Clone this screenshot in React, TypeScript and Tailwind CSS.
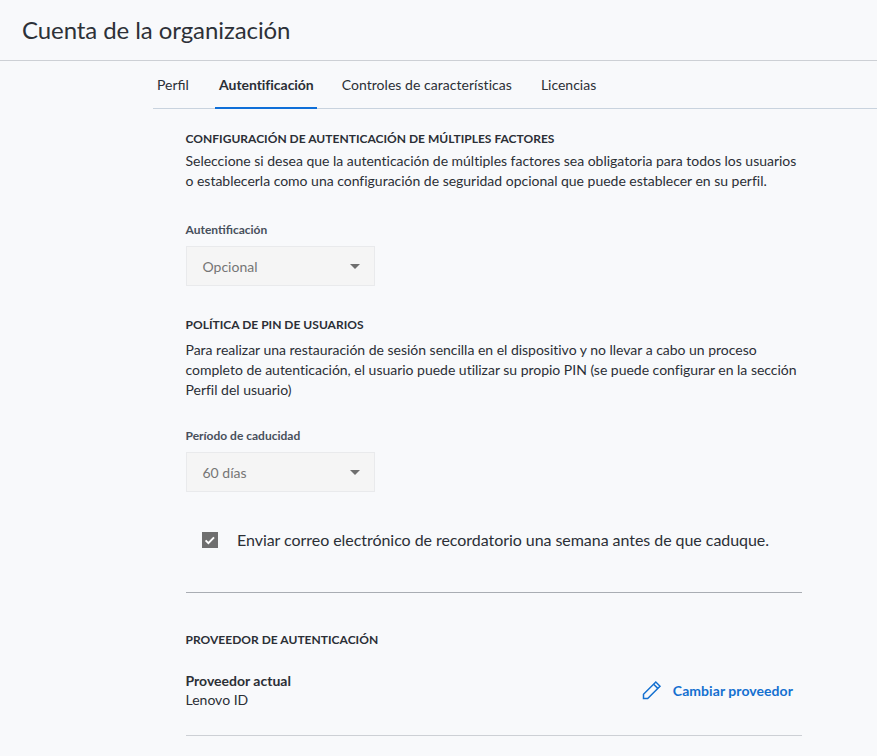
const tabs = [
  { label: 'Perfil', active: false, className: 'w-[33px]' },
  { label: 'Autentificación', active: true, className: '' },
  { label: 'Controles de características', active: false, className: '-ml-[1px] tracking-[0.04px]' },
  { label: 'Licencias', active: false, className: '' },
]

function Caret() {
  return (
    <svg width="10" height="5" viewBox="0 0 10 5" className="text-[#6f6f6f]">
      <path d="M0 0h10L5 5z" fill="currentColor" />
    </svg>
  )
}

function DisabledSelect({ value }: { value: string }) {
  return (
    <div className="flex h-[40px] w-[189px] items-center justify-between border border-[#e9eaec] bg-[#f5f5f5] pl-4 pr-[14px] text-[14px] text-[#757575]">
      <span>{value}</span>
      <Caret />
    </div>
  )
}

function SectionTitle({ children }: { children: string }) {
  return <h2 className="text-[12px] leading-[16px] font-bold tracking-[0.02px] text-[#2b2f36]">{children}</h2>
}

function FieldLabel({ children }: { children: string }) {
  return <div className="text-[12px] leading-[16px] font-bold text-[#48505c]">{children}</div>
}

export default function App() {
  return (
    <div className="h-[756px] w-[877px] overflow-hidden bg-[#f8f9fb] font-['Lato','Liberation_Sans',sans-serif] text-[#2b2f36]">
      <header className="flex h-[61px] items-center border-b border-[#cdd0d5] pl-[22px]">
        <h1 className="text-[24px] leading-[30px] font-normal tracking-[-0.08px] text-[#2d3138]">Cuenta de la organización</h1>
      </header>

      <div className="ml-[153px]">
        <nav className="flex h-[48px] gap-[29px] border-b border-[#c9d3de] pl-[4px] text-[14px]">
          {tabs.map((tab) => (
            <div
              key={tab.label}
              className={
                tab.active
                  ? 'relative -mb-px -ml-[4px] -mr-[3px] flex items-center border-b-2 border-[#0f6fd8] pl-[4px] pr-[3px] font-bold tracking-[-0.04px]'
                  : `flex items-center ${tab.className}`
              }
            >
              {tab.label}
            </div>
          ))}
        </nav>

        <main className="ml-[32.5px] w-[616.5px] pt-[22px]">
          <SectionTitle>CONFIGURACIÓN DE AUTENTICACIÓN DE MÚLTIPLES FACTORES</SectionTitle>
          <p className="mt-[4px] text-[14px] leading-[20px] tracking-[-0.015px]">
            Seleccione si desea que la autenticación de múltiples factores sea obligatoria para todos los usuarios o establecerla como una configuración de seguridad opcional que puede establecer en su perfil.
          </p>

          <div className="mt-[30px]">
            <div className="pt-px">
              <FieldLabel>Autentificación</FieldLabel>
            </div>
            <div className="mt-[8px]">
              <DisabledSelect value="Opcional" />
            </div>
          </div>

          <div className="mt-[31px]">
            <SectionTitle>POLÍTICA DE PIN DE USUARIOS</SectionTitle>
            <p className="mt-[7px] text-[14px] leading-[20px] tracking-[-0.015px]">
              Para realizar una restauración de sesión sencilla en el dispositivo y no llevar a cabo un proceso completo de autenticación, el usuario puede utilizar su propio PIN (se puede configurar en la sección Perfil del usuario)
            </p>
          </div>

          <div className="mt-[28px]">
            <FieldLabel>Período de caducidad</FieldLabel>
            <div className="mt-[8px]">
              <DisabledSelect value="60 días" />
            </div>
          </div>

          <label className="mt-[29px] ml-[16.5px] flex h-[38px] items-center gap-[19px] text-[16px] tracking-[-0.05px]">
            <span className="flex h-[16px] w-[16px] items-center justify-center bg-[#6f6f6f]">
              <svg width="12" height="12" viewBox="0 0 12 12" fill="none">
                <path d="M1.6 6.4l2.8 2.7L10 3.4" stroke="#fff" strokeWidth="2" />
              </svg>
            </span>
            <span>Enviar correo electrónico de recordatorio una semana antes de que caduque.</span>
          </label>

          <div className="mt-[33px] border-t border-[#a9adb3] pt-[39px]">
            <SectionTitle>PROVEEDOR DE AUTENTICACIÓN</SectionTitle>
            <div className="mt-[23px] flex items-center justify-between border-b border-[#cdd0d5] pb-[26px]">
              <div className="text-[14px] leading-[19px]">
                <div className="font-bold">Proveedor actual</div>
                <div>Lenovo ID</div>
              </div>
              <button className="mr-[9px] flex items-center gap-[11px] text-[14px] font-bold tracking-[0.06px] text-[#1470d0]">
                <svg width="20" height="20" viewBox="0 0 20 20" fill="none" stroke="currentColor" strokeWidth="1.5">
                  <path d="M1.5 18.5v-4.2L13.8 2l4.2 4.2L5.7 18.5z" />
                  <path d="M11.6 4.2l4.2 4.2" />
                </svg>
                Cambiar proveedor
              </button>
            </div>
          </div>
        </main>
      </div>
    </div>
  )
}
